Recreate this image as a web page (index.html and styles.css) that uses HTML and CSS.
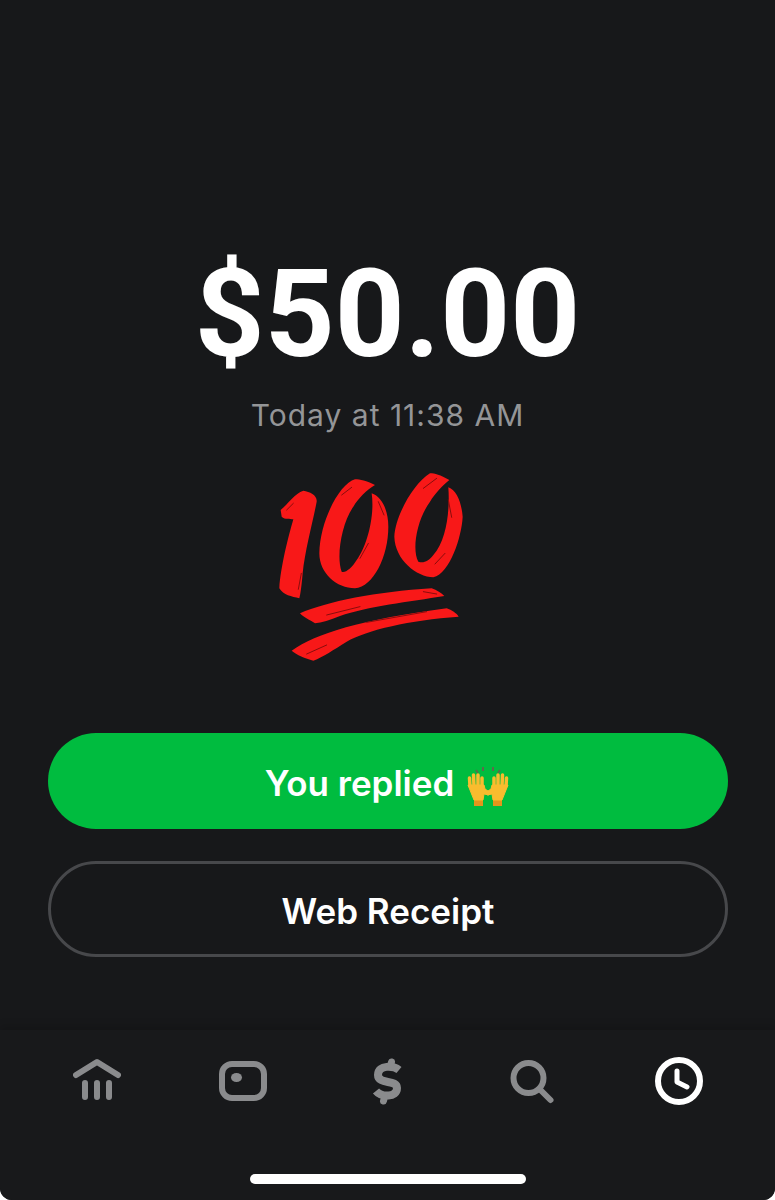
FILE: index.html
```html
<!DOCTYPE html>
<html lang="en">
<head>
    <meta charset="UTF-8">
    <meta name="viewport" content="width=device-width, initial-scale=1.0">
    <title>Payment</title>
    <link rel="stylesheet" href="styles.css">
</head>
<body>
    <div class="screen">
        <div class="content">
            <div class="amount">$50.00</div>
            <div class="date">Today at 11:38 AM</div>
            <svg class="note" viewBox="0 0 765 630" aria-label="100">
                <!-- the 1 -->
                <path class="red" d="M62 150 C85 130 105 100 130 92 C150 95 172 105 170 125 C160 180 135 270 128 340 C125 375 122 400 118 415 C95 410 70 405 58 385 C62 320 85 230 100 178 C90 175 75 180 65 170 Z"/>
                <!-- first 0 -->
                <path class="red" d="M345 75 C320 62 300 58 285 58 C240 70 180 180 178 280 C178 340 230 385 285 385 C340 380 385 290 385 200 C385 150 365 110 335 100 C345 170 320 260 290 300 C275 325 255 340 245 335 C228 290 245 190 280 140 C295 115 320 90 345 75 Z"/>
                <!-- second 0 -->
                <path class="red" d="M568 60 C540 45 525 40 510 40 C460 70 405 170 403 230 C405 300 470 350 520 352 C570 340 605 230 608 170 C605 130 590 90 565 82 C570 150 560 240 520 285 C505 305 490 310 475 305 C455 270 470 180 510 125 C525 100 550 75 568 60 Z"/>
                <!-- underlines -->
                <path class="red" d="M120 460 C200 425 350 395 515 385 C530 390 545 400 553 408 C450 425 320 440 240 468 C210 480 185 488 165 490 C150 480 130 472 120 460 Z"/>
                <path class="red" d="M95 572 C170 520 300 480 560 445 C575 450 590 460 596 470 C450 480 320 510 260 545 C220 570 190 590 160 602 C135 595 110 585 95 572 Z"/>
                <!-- brush streaks -->
                <path class="streak" d="M115 388L124 340M80 150L100 130M245 105L275 82M355 125L372 165M300 295L325 250M490 85L530 55M565 120L575 172M525 312L555 280"/>
                <path class="streak" d="M200 465L300 440M490 395L530 402M320 487L500 455M140 582L200 555"/>
            </svg>
        </div>

        <div class="actions">
            <div class="btn btn-green">You replied
                <svg class="hands" viewBox="0 0 46 42">
                    <path class="tick" d="M11 5l2 3M18 2v4M28 2v4M35 5l-2 3"/>
                    <g>
                        <path class="cuff" d="M9 33h9v8H9z"/>
                        <path class="hand" d="M5 21 L4.500 13M9 21 L8.500 10M13 21 L13 10M17 21 L17 13"/>
                        <path class="palm" d="M3 20 H19 L20 24 L26 28 L24 30 L19 29 L18 35 H9 Z"/>
                    </g>
                    <g transform="matrix(-1 0 0 1 46 0)">
                        <path class="cuff" d="M9 33h9v8H9z"/>
                        <path class="hand" d="M5 21 L4.500 13M9 21 L8.500 10M13 21 L13 10M17 21 L17 13"/>
                        <path class="palm" d="M3 20 H19 L20 24 L26 28 L24 30 L19 29 L18 35 H9 Z"/>
                    </g>
                </svg>
            </div>
            <div class="btn btn-outline">Web Receipt</div>
        </div>

        <div class="tabbar">
            <div class="tabs">
                <svg class="tab" viewBox="0 0 48 48">
                    <path class="stroke" d="M3 18 L24 5 L45 18"/>
                    <path class="stroke" d="M12 26v14M24 26v14M36 26v14"/>
                </svg>
                <svg class="tab" viewBox="0 0 48 48">
                    <rect class="stroke" x="3" y="7" width="42" height="34" rx="10"/>
                    <ellipse class="fill" cx="17.500" cy="20.500" rx="5.500" ry="4.500"/>
                </svg>
                <svg class="tab" viewBox="0 0 48 48">
                    <path class="stroke dollar" d="M35 13 C30 9 14 7 14 18 C14 28 33 22 33 31 C33 41 17 40 12 34"/>
                    <path class="stroke dollar-bar" d="M27.500 5L26.500 9M20.500 40L19.500 44"/>
                </svg>
                <svg class="tab" viewBox="0 0 48 48">
                    <circle class="stroke" cx="18.500" cy="21" r="15"/>
                    <path class="stroke" d="M30 32.500 L40.500 43"/>
                </svg>
                <svg class="tab tab-active" viewBox="0 0 48 48">
                    <circle class="stroke" cx="24" cy="24" r="21"/>
                    <path class="stroke thin" d="M22 14v11l10 5"/>
                </svg>
            </div>
            <div class="home-bar"></div>
        </div>
    </div>
</body>
</html>
```

FILE: styles.css
```css
:root {
    --bg-color: #17181a;
    --tab-color: #18191b;
    --green: #00bc3f;
    --grey: #8a8b8d;
}

html, body {
    margin: 0;
    padding: 0;
    background-color: white;
}

.screen {
    height: 1200px;
    display: flex;
    flex-direction: column;
    overflow: hidden;
    border-radius: 0 0 12px 12px;
    background-color: var(--bg-color);
    font-family: Inter, 'Liberation Sans', sans-serif;
    color: white;
}

.content {
    display: flex;
    flex-direction: column;
    align-items: center;
    padding-top: 250px;
}

.amount {
    font-family: Roboto, 'Liberation Sans', sans-serif;
    font-size: 122px;
    font-weight: 700;
    line-height: 130px;
}

.date {
    margin-top: 15px;
    font-size: 30px;
    line-height: 40px;
    letter-spacing: 1px;
    color: #949597;
}

.note {
    display: block;
    width: 255px;
    height: 210px;
    margin-top: 25px;
}

.red {
    fill: #f81818;
}

.streak {
    fill: none;
    stroke: #8a0c0c;
    stroke-width: 3;
    stroke-linecap: round;
}

.actions {
    display: flex;
    flex-direction: column;
    gap: 32px;
    margin: 63px 47px 0 48px;
}

.btn {
    display: flex;
    align-items: center;
    justify-content: center;
    gap: 11px;
    height: 96px;
    padding-top: 4px;
    box-sizing: border-box;
    border-radius: 48px;
    font-size: 35px;
    font-weight: 600;
}

.btn-green {
    background-color: var(--green);
}

.btn-outline {
    border: 3px solid #47484b;
}

.hands {
    width: 46px;
    height: 42px;
    margin-top: 6px;
}

.hand {
    fill: none;
    stroke: #f9bc2e;
    stroke-width: 3.500;
    stroke-linecap: round;
}

.palm {
    fill: #f9bc2e;
    stroke: #f9bc2e;
    stroke-width: 1;
    stroke-linejoin: round;
}

.cuff {
    fill: #e3951c;
}

.tick {
    fill: none;
    stroke: #5d6b4a;
    stroke-width: 2;
}

.tabbar {
    margin-top: auto;
    height: 170px;
    display: flex;
    flex-direction: column;
    background-color: var(--tab-color);
    box-shadow: 0 -4px 8px rgba(0,0,0,0.15);
}

.tabs {
    display: flex;
    justify-content: space-between;
    padding: 27px 72px 0 73px;
}

.tab {
    width: 48px;
    height: 48px;
}

.stroke {
    fill: none;
    stroke: var(--grey);
    stroke-width: 6;
    stroke-linecap: round;
    stroke-linejoin: round;
}

.fill {
    fill: var(--grey);
}

.dollar {
    stroke-width: 8;
    stroke-linecap: butt;
}

.dollar-bar {
    stroke-width: 7;
}

.tab-active .stroke {
    stroke: white;
}

.tab-active .thin {
    stroke-width: 5;
}

.home-bar {
    width: 276px;
    height: 10px;
    margin: 69px auto 0;
    border-radius: 5px;
    background-color: white;
}
```
